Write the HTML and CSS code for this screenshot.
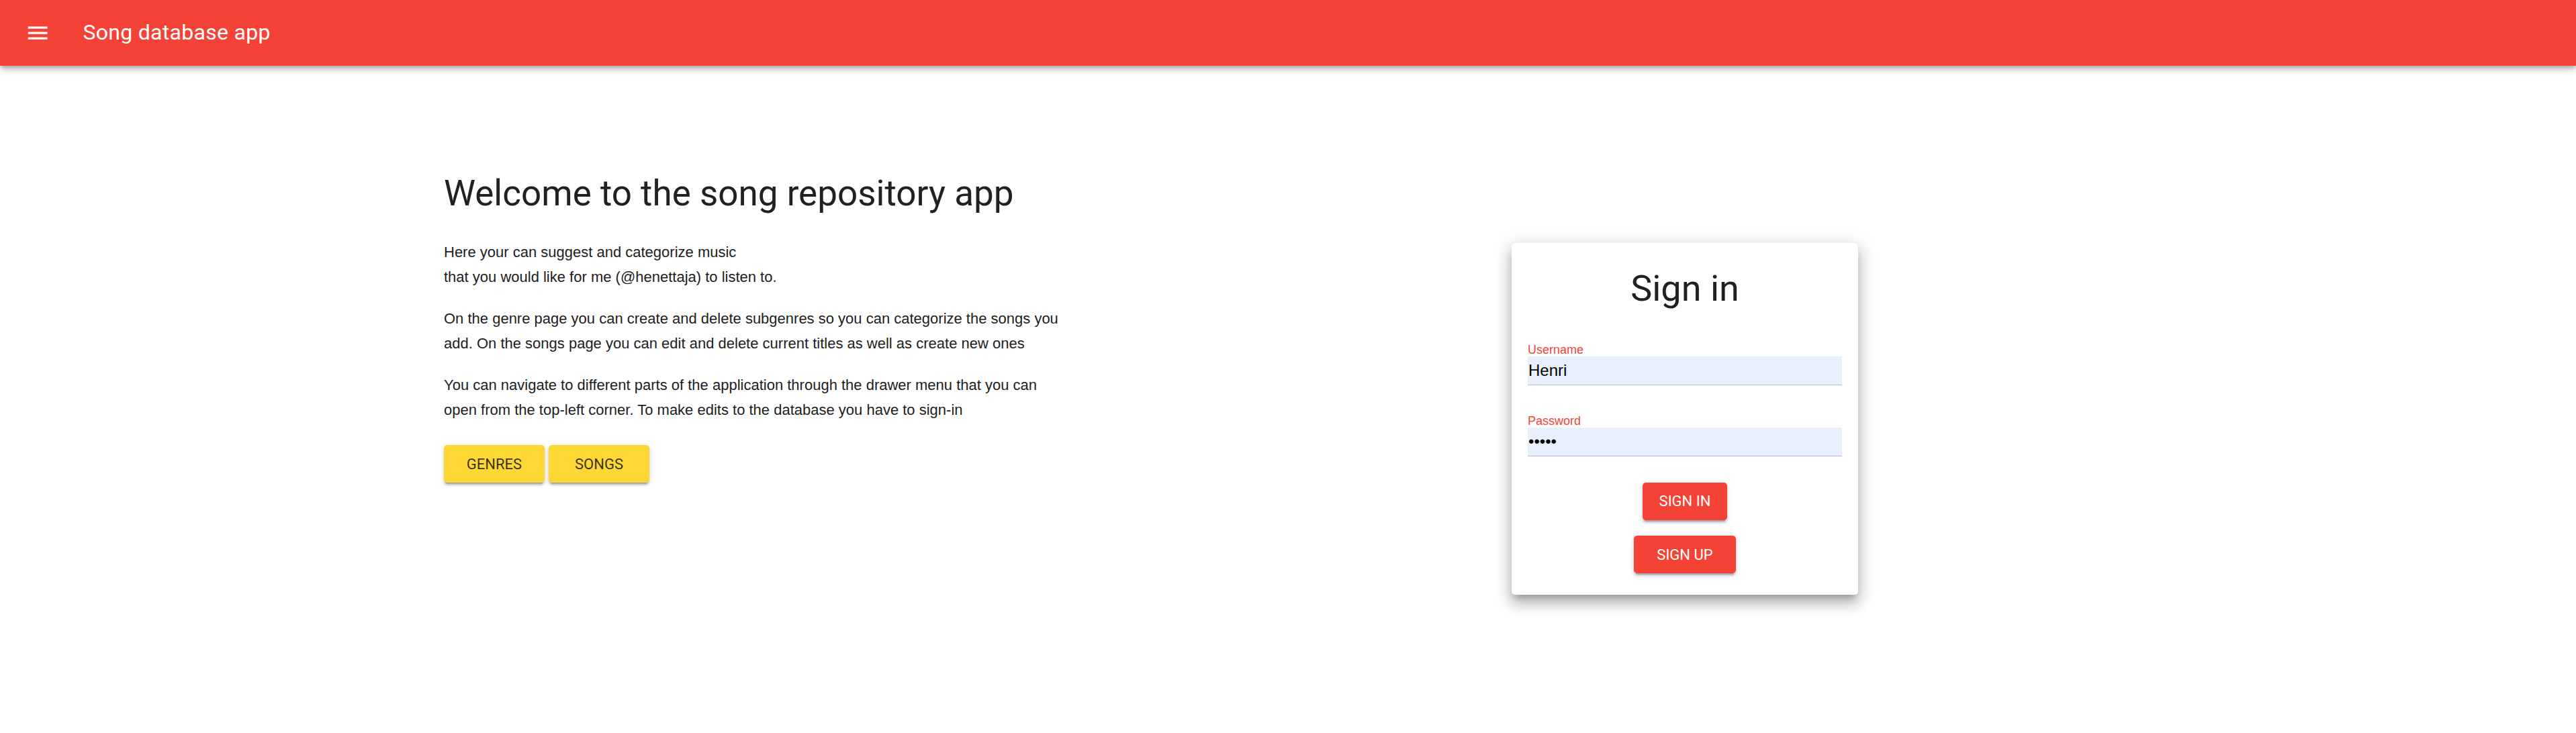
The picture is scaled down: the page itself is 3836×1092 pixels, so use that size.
FILE: index.html
```html
<!DOCTYPE html>
<html lang="en">
<head>
<meta charset="utf-8">
<title>Song database app</title>
<link rel="stylesheet" href="styles.css">
</head>
<body>
<header class="appbar">
  <button class="menu-btn" type="button" aria-label="Open drawer">
    <svg viewBox="0 0 24 24" aria-hidden="true"><path d="M3 18h18v-2H3v2zm0-5h18v-2H3v2zm0-7v2h18V6H3z"/></svg>
  </button>
  <h1 class="app-title">Song database app</h1>
</header>
<main class="main">
  <section class="intro">
    <h2 class="intro-title">Welcome to the song repository app</h2>
    <p class="intro-text intro-lead">Here your can suggest and categorize music<br>that you would like for me (@henettaja) to listen to.</p>
    <p class="intro-text">On the genre page you can create and delete subgenres so you can categorize the songs you add. On the songs page you can edit and delete current titles as well as create new ones</p>
    <p class="intro-text">You can navigate to different parts of the application through the drawer menu that you can open from the top-left corner. To make edits to the database you have to sign-in</p>
    <div class="nav-buttons">
      <button class="btn btn-yellow" type="button">Genres</button>
      <button class="btn btn-yellow" type="button">Songs</button>
    </div>
  </section>
  <form class="card">
    <h2 class="card-title">Sign in</h2>
    <label class="field field-user">
      <span class="field-label">Username</span>
      <input class="field-input" type="text" value="Henri">
    </label>
    <label class="field field-pass">
      <span class="field-label">Password</span>
      <input class="field-input" type="password" value="12345">
    </label>
    <div class="card-actions">
      <button class="btn btn-red btn-signin" type="button">Sign in</button>
      <button class="btn btn-red btn-signup" type="button">Sign up</button>
    </div>
  </form>
</main>
</body>
</html>
```
FILE: styles.css
```css
html, body {
  margin: 0;
  padding: 0;
  background: #ffffff;
  font-family: Roboto, "Liberation Sans", Arial, sans-serif;
}

body {
  min-height: 100vh;
}

.appbar {
  position: relative;
  z-index: 1;
  height: 98px;
  box-sizing: border-box;
  display: flex;
  align-items: center;
  padding-left: 37px;
  background: #f44336;
  box-shadow: 0 3px 6px -1.5px rgba(0, 0, 0, 0.2),
              0 6px 8px 0 rgba(0, 0, 0, 0.14),
              0 1.5px 16px 0 rgba(0, 0, 0, 0.12);
}

.menu-btn {
  display: flex;
  width: 38.4px;
  height: 38.4px;
  padding: 0;
  border: 0;
  background: none;
  cursor: pointer;
}

.menu-btn svg {
  width: 38.4px;
  height: 38.4px;
  fill: #ffffff;
}

.app-title {
  margin: 0 0 0 48px;
  font-family: Roboto, sans-serif;
  font-weight: 400;
  font-size: 32px;
  line-height: 1.6;
  color: #ffffff;
  letter-spacing: 0.3px;
}

.main {
  display: grid;
  grid-template-columns: 924px 516px;
  column-gap: 666px;
  align-items: start;
  padding: 157px 0 80px 661px;
}

.intro-title {
  margin: 0;
  font-family: Roboto, sans-serif;
  font-weight: 400;
  font-size: 53px;
  line-height: 66.7px;
  color: #212121;
}

.intro-text {
  margin: 25.6px 0 0;
  font-family: "Liberation Sans", Arial, sans-serif;
  font-size: 22px;
  line-height: 36.7px;
  color: #212121;
}

.intro-lead {
  margin-top: 36.6px;
}

.nav-buttons {
  display: flex;
  gap: 6px;
  margin-top: 33.6px;
}

.btn {
  height: 56px;
  border: 0;
  border-radius: 5px;
  font-family: Roboto, sans-serif;
  font-weight: 400;
  font-size: 22px;
  text-transform: uppercase;
  cursor: pointer;
  box-shadow: 0 4.8px 1.6px -3.2px rgba(0, 0, 0, 0.2),
              0 3.2px 3.2px 0 rgba(0, 0, 0, 0.14),
              0 1.6px 8px 0 rgba(0, 0, 0, 0.12);
}

.btn-yellow {
  width: 150px;
  padding: 0;
  background: #fdd835;
  color: rgba(0, 0, 0, 0.78);
}

.btn-red {
  background: #f44336;
  color: #ffffff;
}

.btn-signin {
  padding: 0 25px;
}

.btn-signup {
  padding: 0 34px;
}

.card {
  margin: 107px 0 0;
  display: flex;
  flex-direction: column;
  padding: 35px 24px 32px;
  background: #ffffff;
  border-radius: 5px;
  box-shadow: 0 9px 10px -5px rgba(0, 0, 0, 0.24),
              0 14px 20px 2px rgba(0, 0, 0, 0.16),
              0 5px 26px 5px rgba(0, 0, 0, 0.12);
}

.card-title {
  margin: 0;
  text-align: center;
  font-family: Roboto, sans-serif;
  font-weight: 400;
  font-size: 54px;
  line-height: 66.7px;
  color: #212121;
}

.field {
  display: flex;
  flex-direction: column;
}

.field-user {
  margin-top: 47px;
}

.field-pass {
  margin-top: 43px;
}

.field-label {
  font-family: "Liberation Sans", Arial, sans-serif;
  font-size: 18px;
  line-height: 20px;
  color: #f44336;
}

.field-input {
  box-sizing: border-box;
  width: 100%;
  height: 43px;
  margin: 0;
  padding: 0 1px;
  border: 0;
  border-bottom: 1px solid rgba(0, 0, 0, 0.2);
  background: #e8f0fe;
  font-family: "Liberation Sans", Arial, sans-serif;
  font-size: 24px;
  color: #000000;
  outline: none;
}

.card-actions {
  display: flex;
  flex-direction: column;
  align-items: center;
  gap: 23.5px;
  margin-top: 39px;
}
```
